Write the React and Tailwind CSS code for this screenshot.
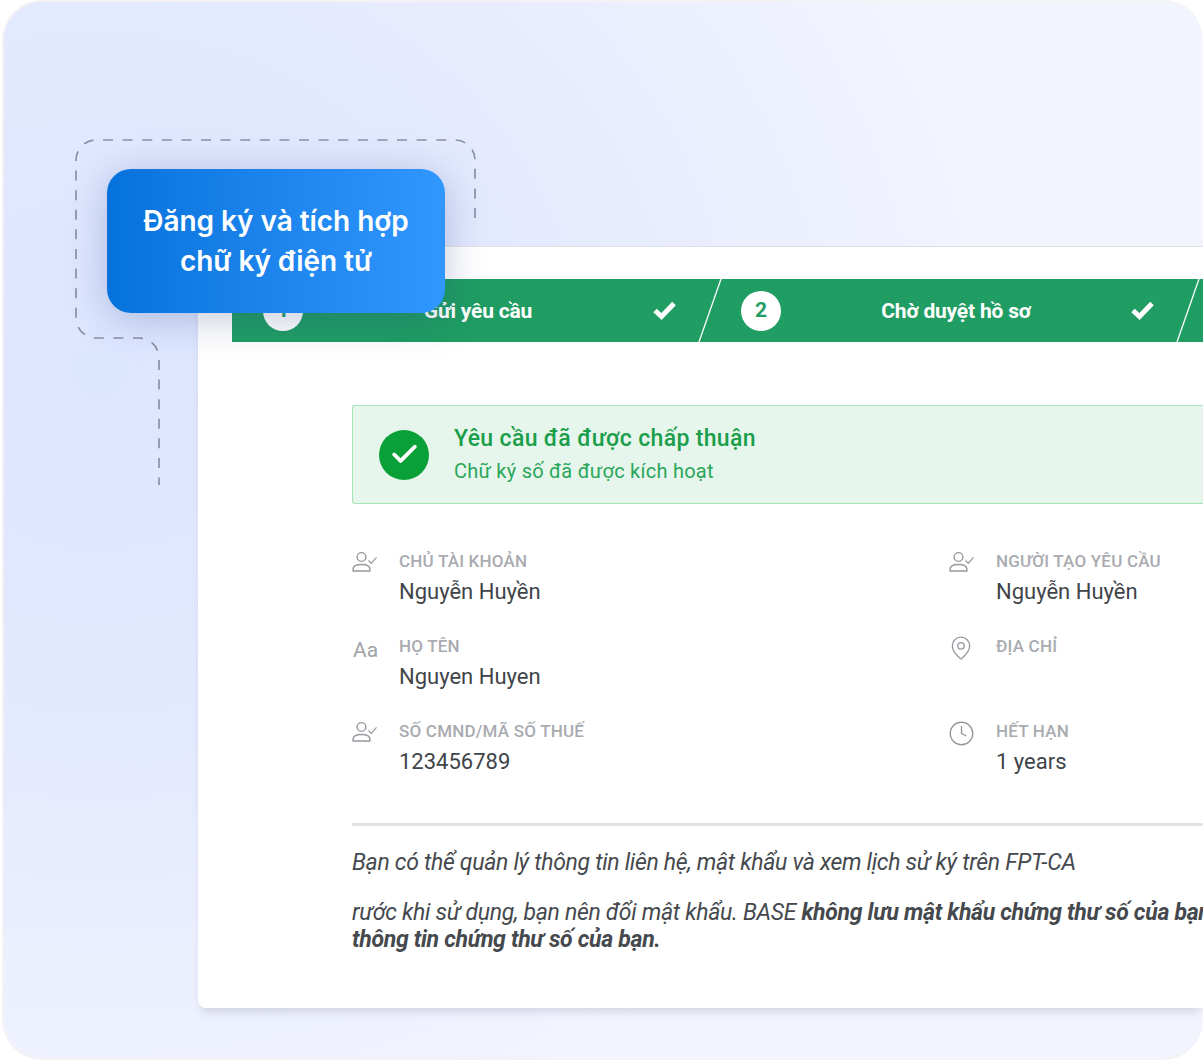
import React from 'react';
import { Check, Clock, MapPin } from 'lucide-react';

const UserCheck = () => (
  <svg width="26" height="22" viewBox="0 0 26 22" fill="none" stroke="#94989d" strokeWidth="1.4" className="mt-[1px]">
    <circle cx="9.5" cy="6" r="4.4" />
    <path d="M1 20v-1.5c0-3 3-5 8.5-5s8.5 2 8.5 5V20z" strokeLinejoin="round" />
    <path d="M16.5 9.5l2.8 2.8 5.2-6" strokeWidth="1.2" />
  </svg>
);

const Aa = () => <span className="text-[21px] leading-[24px] text-[#a0a3a7] mt-[3px] ml-[1px] block">Aa</span>;

const Field = ({ icon, label, value }) => (
  <div className="flex h-[85px]">
    <div className="w-[47px] shrink-0 pt-[1px]">{icon}</div>
    <div>
      <div className="text-[17px] leading-[24px] font-medium text-[#a9abb0] tracking-[0.2px] whitespace-nowrap">{label}</div>
      <div className="text-[22px] leading-[38px] text-[#3f4449] whitespace-nowrap">{value}</div>
    </div>
  </div>
);

const Step = ({ num, title }) => (
  <div className="relative flex items-center w-[478px] h-full pl-[31px] pr-[34px] shrink-0">
    <div className="w-[40px] h-[40px] rounded-full bg-white flex items-center justify-center text-[#1f9d63] text-[21px] font-bold">{num}</div>
    <div className="flex-1 text-center text-white text-[21px] leading-[28px] pt-[1px] font-bold tracking-[-0.2px]">{title}</div>
    <svg width="23" height="19" viewBox="0 0 23 19" fill="none" stroke="#fff" strokeWidth="5">
      <path d="M2 9.5l6.5 6L21 2.5" />
    </svg>
    <svg width="24" height="63" viewBox="0 0 24 63" className="absolute -right-[12px] top-0">
      <path d="M23 0L1 63" stroke="#fff" strokeWidth="1.3" fill="none" />
    </svg>
  </div>
);

export default function App() {
  return (
    <div className="relative w-[1203px] h-[1060px] overflow-hidden bg-white font-['Roboto',sans-serif]">
      {/* Background panel */}
      <div className="h-full ml-[2px] pt-[244px] pl-[194px] pb-[52px] rounded-[40px] border-2 border-[#f4f2f4] border-r-0 bg-[radial-gradient(ellipse_75%_75%_at_8%_35%,#dde6ff_0%,#e3e9fe_45%,#f2f4fe_100%)]">
        {/* Card */}
        <div className="h-[762px] bg-white border-t border-[#dfe0e4] rounded-bl-[8px] shadow-[0_7px_9px_-3px_rgba(60,60,90,0.16)] overflow-hidden pt-[32px]">
          {/* Stepper */}
          <div className="flex h-[63px] ml-[34px] bg-[#1f9d63] overflow-hidden">
            <Step num="1" title="Gửi yêu cầu" />
            <Step num="2" title="Chờ duyệt hồ sơ" />
          </div>

          <div className="pl-[154px] pt-[63px]">
            {/* Alert */}
            <div className="flex items-center h-[99px] pl-[26px] bg-[#e6f6ec] border border-r-0 border-[#a6e3b8] rounded-l-[3px]">
              <div className="w-[50px] h-[50px] rounded-full bg-[#0aa038] flex items-center justify-center">
                <Check className="text-white w-[31px] h-[31px]" strokeWidth={3} />
              </div>
              <div className="ml-[25px]">
                <div className="text-[23px] leading-[32px] font-medium text-[#1a9e4a] tracking-[0.35px] whitespace-nowrap">Yêu cầu đã được chấp thuận</div>
                <div className="text-[20px] leading-[32px] text-[#2aa65a] tracking-[0.25px] whitespace-nowrap">Chữ ký số đã được kích hoạt</div>
              </div>
            </div>

            {/* Info */}
            <div className="grid grid-cols-[597px_1fr] pt-[45px]">
              <Field icon={<UserCheck />} label="CHỦ TÀI KHOẢN" value="Nguyễn Huyền" />
              <Field icon={<UserCheck />} label="NGƯỜI TẠO YÊU CẦU" value="Nguyễn Huyền" />
              <Field icon={<Aa />} label="HỌ TÊN" value="Nguyen Huyen" />
              <Field icon={<MapPin className="text-[#94989d] w-[26px] h-[26px] -ml-[1px]" strokeWidth={1.2} />} label="ĐỊA CHỈ" value="" />
              <Field icon={<UserCheck />} label="SỐ CMND/MÃ SỐ THUẾ" value="123456789" />
              <Field icon={<Clock className="text-[#94989d] w-[27px] h-[27px] -ml-[1px]" strokeWidth={1.2} />} label="HẾT HẠN" value="1 years" />
            </div>

            {/* Note */}
            <div className="border-t-[3px] border-[#e2e3e6] mt-[19px] pt-[21px] italic text-[23px] text-[#45494e] tracking-[-0.3px] whitespace-nowrap">
              <p className="leading-[32px]">Bạn có thể quản lý thông tin liên hệ, mật khẩu và xem lịch sử ký trên FPT-CA</p>
              <p className="leading-[27px] mt-[20px]">
                rước khi sử dụng, bạn nên đổi mật khẩu. BASE <b className="font-bold">không lưu mật khẩu chứng thư số của bạn</b>
                <br />
                <b className="font-bold">thông tin chứng thư số của bạn.</b>
              </p>
            </div>
          </div>
        </div>
      </div>

      {/* Dashed connector around the callout */}
      <svg width="500" height="500" viewBox="0 0 500 500" fill="none" className="absolute left-0 top-0">
        <path
          d="M475 218V160a20 20 0 0 0-20-20H96a20 20 0 0 0-20 20V318a20 20 0 0 0 20 20H139a20 20 0 0 1 20 20V485"
          stroke="#8a90a6"
          strokeWidth="1.7"
          strokeDasharray="10 9.6"
        />
      </svg>

      {/* Callout */}
      <div className="absolute left-[107px] top-[169px] w-[338px] h-[144px] rounded-[24px] bg-gradient-to-r from-[#0572dc] to-[#2f97ff] shadow-[0_6px_40px_rgba(40,60,130,0.28)] flex items-center justify-center text-center text-white font-['Inter',sans-serif] font-semibold text-[28px] tracking-[-0.05px] leading-[40px]">
        <div>Đăng ký và tích hợp<br />chữ ký điện tử</div>
      </div>
    </div>
  );
}
